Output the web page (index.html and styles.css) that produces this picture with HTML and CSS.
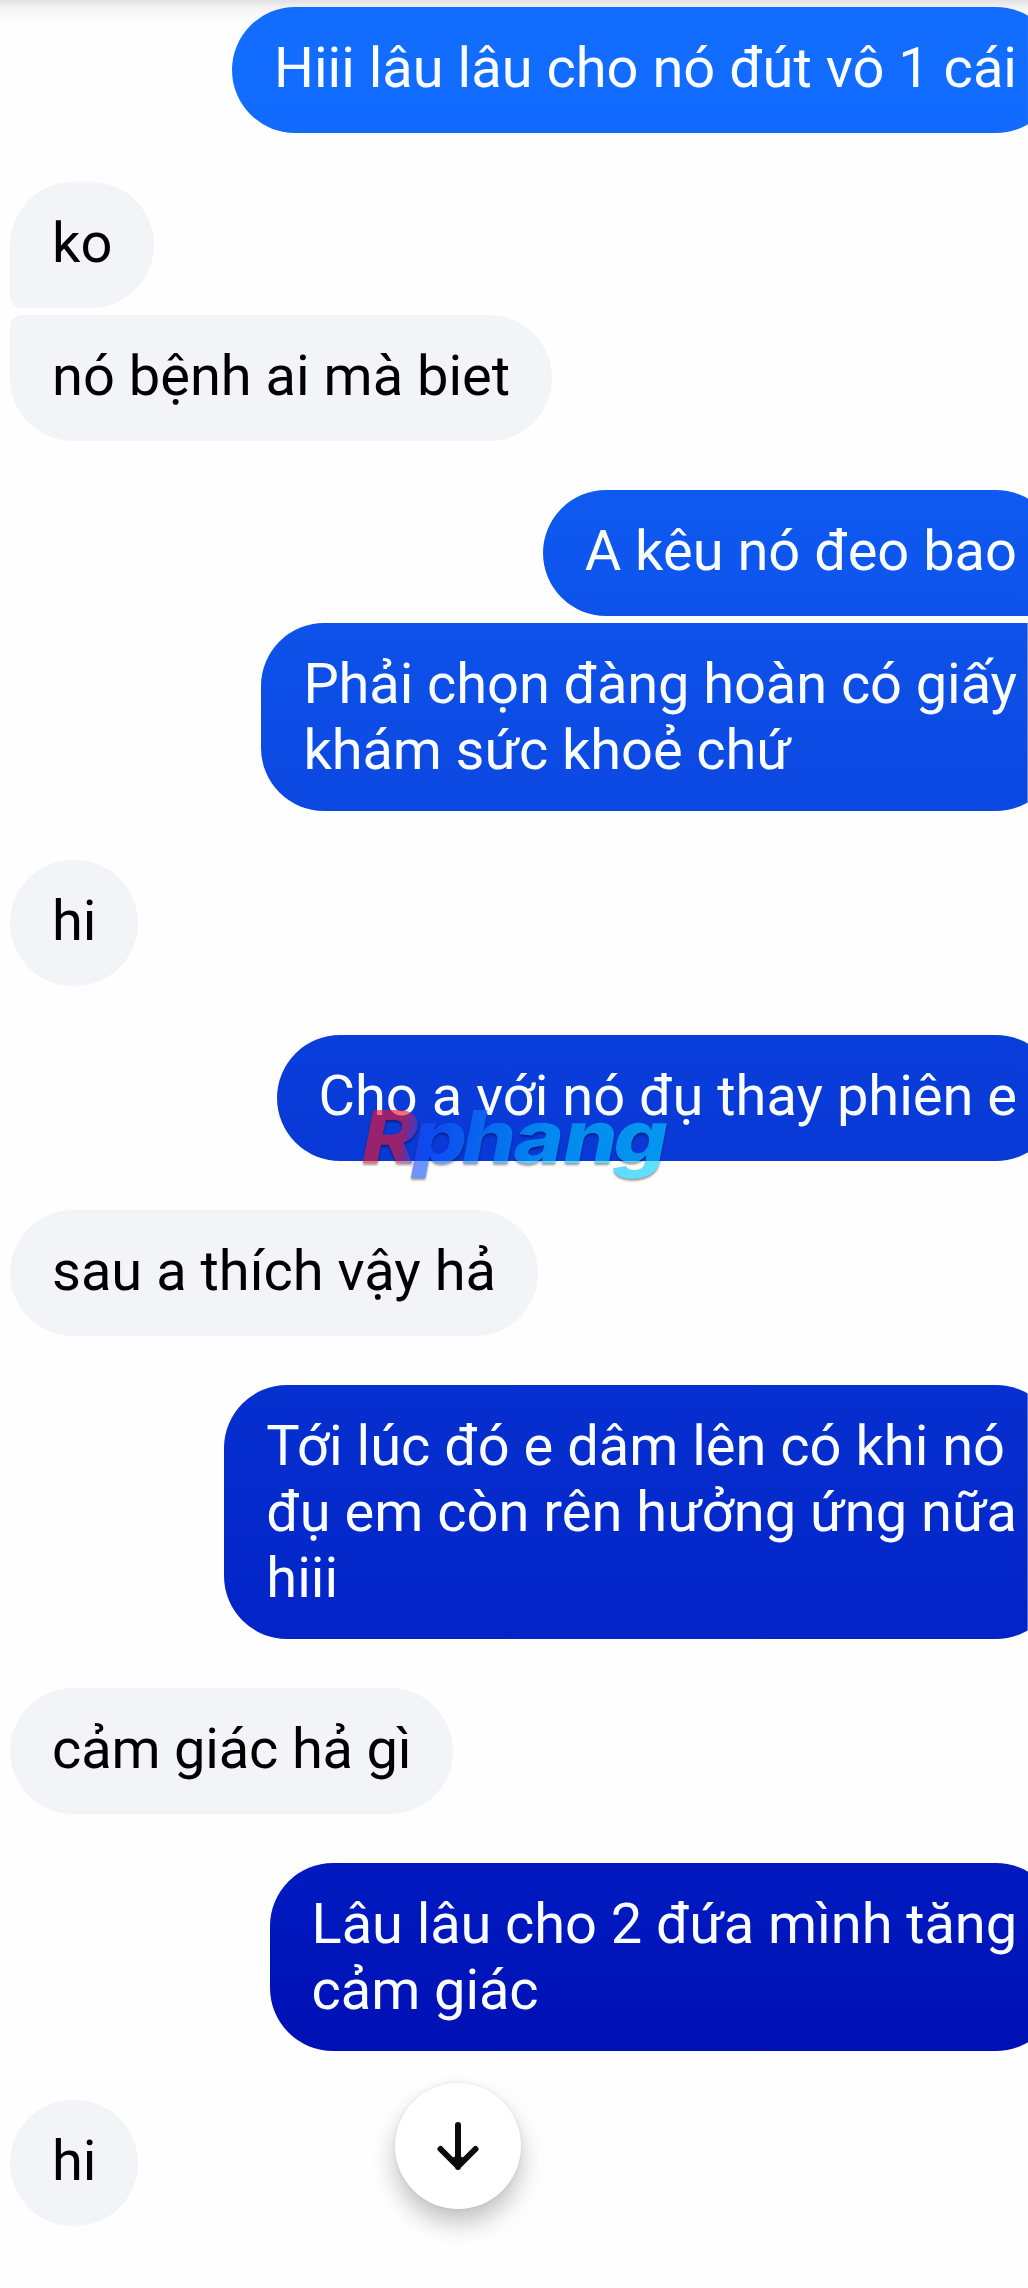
FILE: index.html
```html
<!DOCTYPE html>
<html lang="vi">
<head>
<meta charset="utf-8">
<title>Chat</title>
<link rel="stylesheet" href="styles.css">
</head>
<body>
<main class="chat">
  <div class="thread">
    <div class="group sent"><p class="bubble">Hiii lâu lâu cho nó đút vô 1 cái</p></div>
    <div class="group received">
      <p class="bubble first">ko</p>
      <p class="bubble last">nó bệnh ai mà biet</p>
    </div>
    <div class="group sent">
      <p class="bubble first">A kêu nó đeo bao</p>
      <p class="bubble last snug">Phải chọn đàng hoàn có giấy<br>khám sức khoẻ chứ</p>
    </div>
    <div class="group received"><p class="bubble">hi</p></div>
    <div class="group sent"><p class="bubble">Cho a với nó đụ thay phiên e</p></div>
    <div class="group received"><p class="bubble">sau a thích vậy hả</p></div>
    <div class="group sent"><p class="bubble">Tới lúc đó e dâm lên có khi nó<br>đụ em còn rên hưởng ứng nữa<br>hiii</p></div>
    <div class="group received"><p class="bubble snugger">cảm giác hả gì</p></div>
    <div class="group sent"><p class="bubble snug">Lâu lâu cho 2 đứa mình tăng<br>cảm giác</p></div>
    <div class="group received"><p class="bubble">hi</p></div>
  </div>

  <svg class="watermark" width="350" height="120" viewBox="0 0 350 120">
    <defs>
      <linearGradient id="wm" gradientUnits="userSpaceOnUse" x1="0" y1="0" x2="270" y2="0">
        <stop offset="0" stop-color="#f0142c"/>
        <stop offset=".12" stop-color="#f0142c"/>
        <stop offset=".19" stop-color="#1450ff"/>
        <stop offset=".36" stop-color="#0a7cff"/>
        <stop offset=".6" stop-color="#00baff"/>
        <stop offset="1" stop-color="#00d2ff"/>
      </linearGradient>
    </defs>
    <text class="watermark-text" transform="translate(13 83) skewX(-11) scale(1.16 1)" x="0 44 86.500 131 174 217" fill="url(#wm)">Rphang</text>
  </svg>

  <button class="scroll-down" aria-label="Scroll down">
    <svg width="48" height="54" viewBox="0 0 48 54">
      <path d="M24 6v42M6.500 30L24 47.500L41.500 30" fill="none" stroke="#0a0a0a" stroke-width="6" stroke-linecap="round" stroke-linejoin="round"/>
      <path d="M24 36v12l-8-8z M24 36v12l8-8z" fill="#0a0a0a"/>
    </svg>
  </button>
</main>
</body>
</html>
```
FILE: styles.css
```css
* { box-sizing: border-box; }

html, body {
  margin: 0;
  overflow: hidden;
}

body {
  background: #fff;
  font-family: Roboto, "Noto Sans", sans-serif;
}

.chat {
  position: relative;
  width: 1028px;
  height: 2288px;
  overflow: hidden;
  background: linear-gradient(#e2e2e2, #f5f5f5 9px, #fefefe 24px);
}

/* Sent bubbles run past the right edge of the screen. */
.thread {
  display: flex;
  flex-direction: column;
  gap: 49px;
  width: 1059px;
  padding: 6.5px 0 0 10px;
}

.group {
  display: flex;
  flex-direction: column;
  gap: 7px;
}

.sent { align-items: flex-end; }
.received { align-items: flex-start; }

.bubble {
  margin: 0;
  min-height: 126px;
  padding: 28px 42px;
  border-radius: 63px;
  font-size: 56px;
  line-height: 66px;
  white-space: nowrap;
}

.snug { letter-spacing: -.09px; }
.snugger { letter-spacing: -.18px; }

.received .bubble {
  background: #f2f4f8;
  color: #000;
}

.sent .bubble {
  background: linear-gradient(#126dff 0, #126cff 100px, #0e57ee 550px, #0c4ae3 760px, #093bd8 1100px, #062dce 1450px, #0324c8 1620px, #0019bf 1900px, #0010b4 2050px) fixed;
  color: #fafdff;
}

.received .first { border-bottom-left-radius: 12px; }
.received .last { border-top-left-radius: 12px; }
.sent .first { border-bottom-right-radius: 12px; }
.sent .last { border-top-right-radius: 12px; }

.watermark {
  position: absolute;
  left: 345px;
  top: 1080px;
  opacity: .62;
  filter: drop-shadow(0 2px 1px rgba(0, 0, 0, .65));
}

.watermark-text {
  font-family: Inter, sans-serif;
  font-size: 73px;
  font-weight: 800;
}

.scroll-down {
  position: absolute;
  left: 395px;
  top: 2083px;
  display: flex;
  align-items: center;
  justify-content: center;
  width: 126px;
  height: 126px;
  padding: 0;
  border: 0;
  border-radius: 50%;
  background: #fff;
  box-shadow: 0 14px 24px rgba(0, 0, 0, .24), 0 0 4px rgba(0, 0, 0, .08);
}
```
